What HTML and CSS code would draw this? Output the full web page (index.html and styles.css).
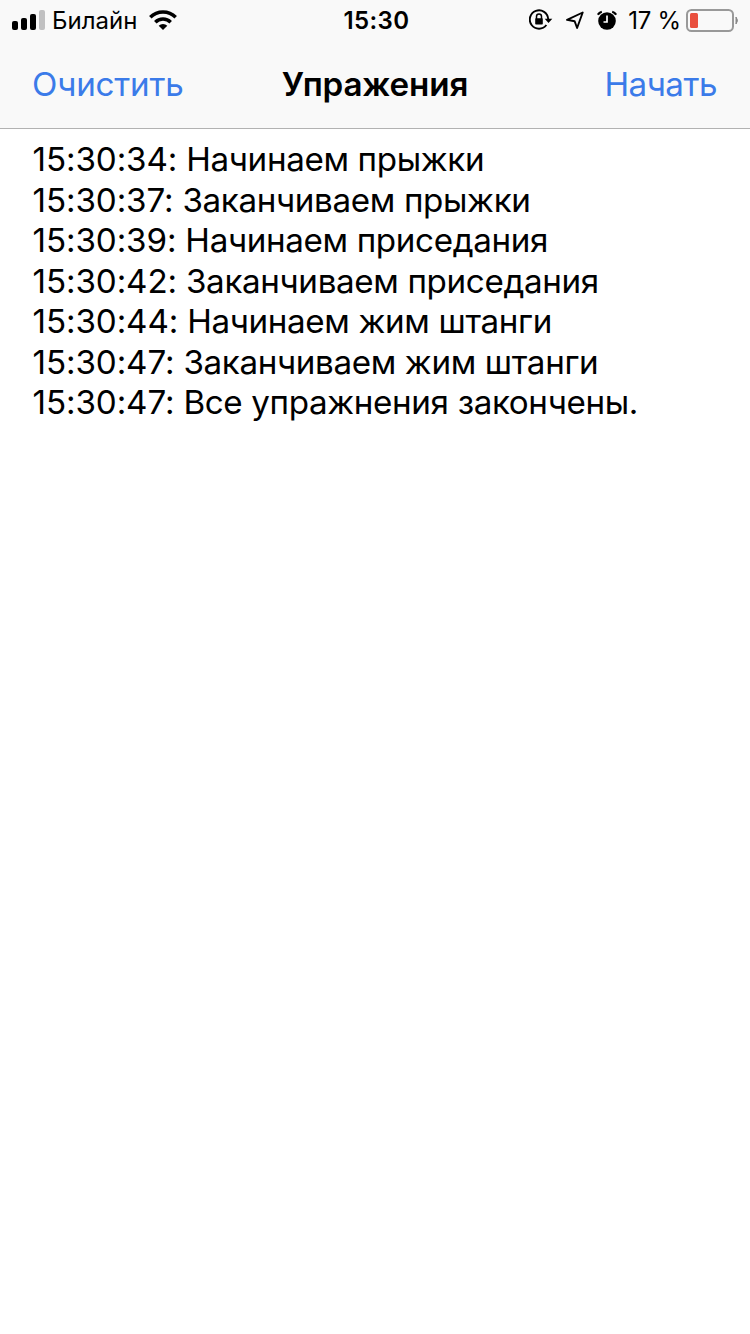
FILE: index.html
```html
<!DOCTYPE html>
<html lang="ru">
<head>
<meta charset="utf-8">
<title>Упражения</title>
<link rel="stylesheet" href="styles.css">
</head>
<body>
<header class="top">
  <div class="status">
    <div class="side">
      <svg class="signal" width="34" height="20" viewBox="0 0 34 20"><rect x="0" y="11" width="6" height="9" rx="2"/><rect x="9" y="8" width="6" height="12" rx="2"/><rect x="18" y="4" width="6" height="16" rx="2"/><rect x="27" y="0" width="6" height="20" rx="2" fill="#c0c0c1"/></svg>
      <span class="carrier">Билайн</span>
      <svg class="wifi" width="28" height="20" viewBox="0 0 28 20"><path d="M14 20l4.300-4.200a6.200 6.200 0 0 0-8.600 0z"/><path d="M6.300 12.200a11 11 0 0 1 15.400 0M1.300 7.200a18 18 0 0 1 25.400 0" fill="none" stroke="#000" stroke-width="3.500"/></svg>
    </div>
    <span class="clock">15:30</span>
    <div class="side end">
      <svg class="lock" width="24" height="22" viewBox="0 0 24 22"><path d="M17.400 16A9.200 9.200 0 1 1 19.200 10" fill="none" stroke="#000" stroke-width="1.900"/><path d="M15.700 9.700h7.600l-3.800 4.300z"/><rect x="6.200" y="9.200" width="7.600" height="6.300" rx=".8"/><path d="M7.500 10V7.600a2.500 2.500 0 0 1 5 0V10" fill="none" stroke="#000" stroke-width="1.500"/></svg>
      <svg class="arrow" width="20" height="20" viewBox="0 0 20 20"><path d="M17.700 2.500L12.100 18 9.600 11.200 2 9.800z" fill="none" stroke="#000" stroke-width="1.900" stroke-linejoin="round"/></svg>
      <svg class="alarm" width="20" height="20" viewBox="0 0 20 20"><circle cx="10" cy="11" r="8.800"/><path d="M.9 4.700Q2.200 2.400 4.800 1.700M19.100 4.700Q17.800 2.400 15.200 1.700" fill="none" stroke="#000" stroke-width="2.200"/><path d="M10 5.500V12H6.500" fill="none" stroke="#fff" stroke-width="1.700"/></svg>
      <span class="percent">17 %</span>
      <svg class="battery" width="53" height="23" viewBox="0 0 53 23"><rect x="1" y="1" width="46" height="21" rx="4.500" fill="none" stroke="#999" stroke-width="2"/><rect x="4" y="4" width="8" height="15" rx="1.500" fill="#e94f3d"/><path d="M50 8q3 3.500 0 7z" fill="#888" stroke="#888"/></svg>
    </div>
  </div>
  <nav class="nav"><a class="action">Очистить</a><h1 class="title">Упражения</h1><a class="action right">Начать</a></nav>
</header>
<main class="log">
  <p class="line"><span class="time">15:30:34:</span> Начинаем прыжки</p>
  <p class="line"><span class="time">15:30:37:</span> Заканчиваем прыжки</p>
  <p class="line"><span class="time">15:30:39:</span> Начинаем приседания</p>
  <p class="line"><span class="time">15:30:42:</span> Заканчиваем приседания</p>
  <p class="line"><span class="time">15:30:44:</span> Начинаем жим штанги</p>
  <p class="line"><span class="time">15:30:47:</span> Заканчиваем жим штанги</p>
  <p class="line"><span class="time">15:30:47:</span> Все упражнения закончены.</p>
</main>
</body>
</html>
```

FILE: styles.css
```css
body { margin: 0; background: #fff; color: #000; font-family: Inter, "Liberation Sans", sans-serif; }
svg { display: block; flex: none; }
.top { box-sizing: border-box; height: 129px; background: #f9f9f9; border-bottom: 1px solid #b2b2b2; }
.status { display: grid; grid-template-columns: 1fr auto 1fr; align-items: center; height: 40px; padding: 0 11px 0 12px; font-size: 24px; white-space: nowrap; }
.side { display: flex; align-items: center; }
.end { justify-content: flex-end; }
.carrier { margin-left: 6px; }
.wifi { margin-left: 12px; }
.clock { padding-left: 2px; font-weight: 600; letter-spacing: 0.4px; }
.arrow { margin-left: 12px; }
.alarm { margin-left: 12px; }
.percent { margin: 0 5px 0 11px; letter-spacing: -0.2px; }
.battery { margin-top: 1px; }
.nav { display: grid; grid-template-columns: 1fr auto 1fr; align-items: center; height: 88px; padding: 0 32px; font-size: 33.2px; }
.action { color: #3b7be9; letter-spacing: -0.2px; }
.right { padding-right: 1px; text-align: right; letter-spacing: -0.5px; }
.title { margin: 0; font-size: 33.2px; font-weight: 600; letter-spacing: -0.15px; }
.log { padding: 10px 32.6px; }
.line { margin: 0; font-size: 33.2px; line-height: 40.5px; letter-spacing: -0.36px; white-space: nowrap; }
.time { letter-spacing: -0.12px; }
```
